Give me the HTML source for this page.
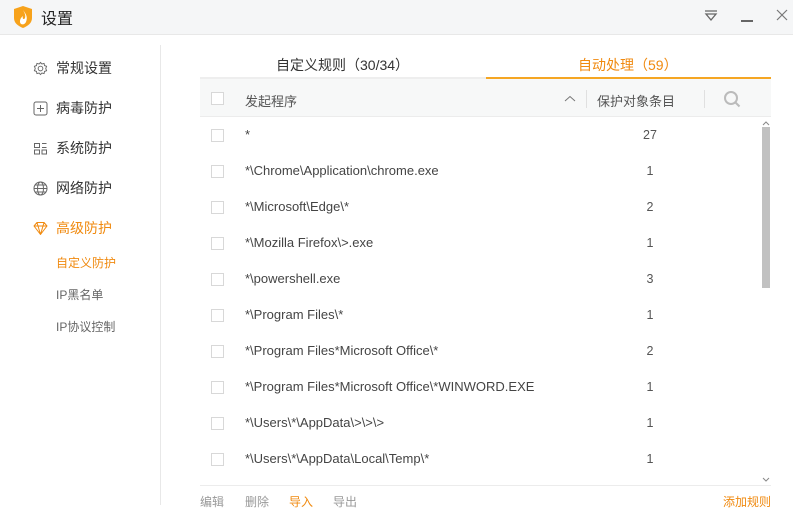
<!DOCTYPE html>
<html><head><meta charset="utf-8"><style>
*{margin:0;padding:0;box-sizing:border-box}
body{width:793px;height:530px;background:#fff;font-family:"Liberation Sans","Noto Sans CJK SC",sans-serif;position:relative;overflow:hidden;color:#333}
.a{position:absolute}
.title{left:0;top:0;width:793px;height:35px;background:#f5f6f7;border-bottom:1px solid #e8e8e8}
.nav{left:33px;font-size:14px;color:#333;display:flex;align-items:center}
.nav svg{margin-right:8px}
.sub{left:56px;font-size:12px;color:#666}
.cb{position:absolute;left:211px;width:13px;height:13px;border:1px solid #d8d8d8;background:#fff}
.row{position:absolute;left:245px;font-size:13px;color:#444}
.num{position:absolute;left:630px;width:40px;text-align:center;font-size:12.5px;color:#555}
</style></head><body>
<div class="a title"></div>
<svg class="a" style="left:13px;top:5px" width="20" height="24" viewBox="0 0 20 24"><path d="M10 1L19 4V13C19 18 15 21 10 23C5 21 1 18 1 13V4Z" fill="#f7a21b"/><path d="M10 5C13 9 15 12 13 17C12 19 10 20 8 19C6 17 7 13 10 11C9 14 11 15 12 13C13 10 11 7 10 5Z" fill="#fff"/></svg>
<div class="a" style="left:41px;top:5px;font-size:16px;color:#222">设置</div>
<svg class="a" style="left:704px;top:10px" width="14" height="12"><path d="M1 1H13M2 4H12L7 10Z" stroke="#666" stroke-width="1.3" fill="none"/></svg>
<div class="a" style="left:741px;top:20px;width:12px;height:1.5px;background:#666"></div>
<svg class="a" style="left:776px;top:9px" width="12" height="12"><path d="M1 1L11 11M11 1L1 11" stroke="#777" stroke-width="1.2"/></svg>

<div class="a" style="left:160px;top:45px;width:1px;height:460px;background:#e8e8e8"></div>
<div class="a nav" style="top:58px"><svg width="15" height="15" viewBox="0 0 16 16"><circle cx="8" cy="8" r="2.5" stroke="#666" fill="none"/><path d="M8 1.5L9.5 3.2L11.8 2.6L12.3 4.9L14.5 5.6L13.6 8L14.5 10.4L12.3 11.1L11.8 13.4L9.5 12.8L8 14.5L6.5 12.8L4.2 13.4L3.7 11.1L1.5 10.4L2.4 8L1.5 5.6L3.7 4.9L4.2 2.6L6.5 3.2Z" stroke="#666" fill="none"/></svg>常规设置</div>
<div class="a nav" style="top:98px"><svg width="15" height="15"><rect x="1" y="1" width="13" height="13" rx="2" stroke="#666" fill="none"/><path d="M7.5 4V11M4 7.5H11" stroke="#666"/></svg>病毒防护</div>
<div class="a nav" style="top:138px"><svg width="15" height="15"><path d="M1.5 2.5H6.5V6.5H1.5ZM1.5 9H6.5V13H1.5ZM9 2.5H13.5M9 6.5H13.5M9 9H13.5V13H9Z" stroke="#666" fill="none"/></svg>系统防护</div>
<div class="a nav" style="top:178px"><svg width="15" height="15"><circle cx="7.5" cy="7.5" r="6.5" stroke="#666" fill="none"/><ellipse cx="7.5" cy="7.5" rx="3" ry="6.5" stroke="#666" fill="none"/><path d="M1 7.5H14M2 4H13M2 11H13" stroke="#666"/></svg>网络防护</div>
<div class="a nav" style="top:218px;color:#f08a10"><svg width="15" height="15"><path d="M1 5L4 1.5H11L14 5L7.5 13.5Z M1 5H14M5 5L7.5 13.5L10 5M4 1.5L5 5M11 1.5L10 5" stroke="#f08a10" fill="none" stroke-linejoin="round"/></svg>高级防护</div>
<div class="a sub" style="top:254px;color:#f08a10">自定义防护</div>
<div class="a sub" style="top:286px">IP黑名单</div>
<div class="a sub" style="top:318px">IP协议控制</div>

<div class="a" style="left:276px;top:55px;font-size:14px;color:#333">自定义规则（30/34）</div>
<div class="a" style="left:578px;top:55px;font-size:14px;color:#f08a10">自动处理（59）</div>
<div class="a" style="left:200px;top:77px;width:286px;height:2px;background:#eee"></div>
<div class="a" style="left:486px;top:77px;width:285px;height:2px;background:#f5a623"></div>
<div class="a" style="left:200px;top:79px;width:571px;height:38px;background:#f7f8f8;border-bottom:1px solid #ececec"></div>
<div class="cb" style="top:92px"></div>
<div class="a" style="left:245px;top:91px;font-size:13px;color:#555">发起程序</div>
<svg class="a" style="left:564px;top:95px" width="12" height="8"><path d="M1 6L6 1.5L11 6" stroke="#777" fill="none"/></svg>
<div class="a" style="left:586px;top:90px;width:1px;height:18px;background:#e0e0e0"></div>
<div class="a" style="left:597px;top:91px;font-size:13px;color:#555">保护对象条目</div>
<div class="a" style="left:704px;top:90px;width:1px;height:18px;background:#e0e0e0"></div>
<svg class="a" style="left:723px;top:90px" width="18" height="18"><circle cx="8" cy="8" r="6" stroke="#bbb" stroke-width="2" fill="none"/><path d="M12.5 12.5L16.5 16.5" stroke="#bbb" stroke-width="2"/></svg>

<div class="a" style="left:762px;top:127px;width:8px;height:161px;background:#c1c1c1"></div>
<svg class="a" style="left:762px;top:120px" width="8" height="6"><path d="M1 5L4 2L7 5" stroke="#888" fill="none"/></svg>
<svg class="a" style="left:762px;top:477px" width="8" height="6"><path d="M1 1L4 4L7 1" stroke="#888" fill="none"/></svg>

<div class="cb" style="top:129px"></div><div class="row" style="top:127px">*</div><div class="num" style="top:128px">27</div>
<div class="cb" style="top:165px"></div><div class="row" style="top:163px">*\Chrome\Application\chrome.exe</div><div class="num" style="top:164px">1</div>
<div class="cb" style="top:201px"></div><div class="row" style="top:199px">*\Microsoft\Edge\*</div><div class="num" style="top:200px">2</div>
<div class="cb" style="top:237px"></div><div class="row" style="top:235px">*\Mozilla Firefox\&gt;.exe</div><div class="num" style="top:236px">1</div>
<div class="cb" style="top:273px"></div><div class="row" style="top:271px">*\powershell.exe</div><div class="num" style="top:272px">3</div>
<div class="cb" style="top:309px"></div><div class="row" style="top:307px">*\Program Files\*</div><div class="num" style="top:308px">1</div>
<div class="cb" style="top:345px"></div><div class="row" style="top:343px">*\Program Files*Microsoft Office\*</div><div class="num" style="top:344px">2</div>
<div class="cb" style="top:381px"></div><div class="row" style="top:379px">*\Program Files*Microsoft Office\*WINWORD.EXE</div><div class="num" style="top:380px">1</div>
<div class="cb" style="top:417px"></div><div class="row" style="top:415px">*\Users\*\AppData\&gt;\&gt;\&gt;</div><div class="num" style="top:416px">1</div>
<div class="cb" style="top:453px"></div><div class="row" style="top:451px">*\Users\*\AppData\Local\Temp\*</div><div class="num" style="top:452px">1</div>

<div class="a" style="left:200px;top:485px;width:571px;height:1px;background:#ececec"></div>
<div class="a" style="left:200px;top:493px;font-size:12px;color:#999">编辑</div>
<div class="a" style="left:245px;top:493px;font-size:12px;color:#999">删除</div>
<div class="a" style="left:289px;top:493px;font-size:12px;color:#f08a10">导入</div>
<div class="a" style="left:333px;top:493px;font-size:12px;color:#999">导出</div>
<div class="a" style="left:723px;top:493px;font-size:12px;color:#f08a10">添加规则</div>
</body></html>
